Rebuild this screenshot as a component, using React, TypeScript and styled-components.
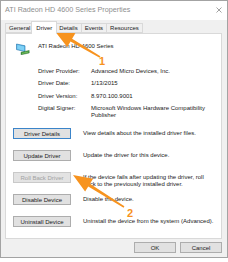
import { Fragment } from "react";
import styled, { createGlobalStyle } from "styled-components";

const GlobalStyle = createGlobalStyle`
    html, body {
        margin: 0;
        padding: 0;
        background: #ffffff;
    }
    body {
        font-family: "Liberation Sans", Arial, sans-serif;
        color: #1a1a1a;
    }
`;

const Page = styled.div`
    position: relative;
    width: 228px;
    height: 262px;
`;

const Window = styled.div`
    box-sizing: border-box;
    width: 228px;
    height: 258px;
    border: 1px solid #a3a3a3;
    background: #f0f0f0;
    display: flex;
    flex-direction: column;
`;

const TitleBar = styled.div`
    flex: none;
    height: 19px;
    padding: 0 5px 2px 4px;
    box-sizing: border-box;
    background: #ffffff;
    display: flex;
    align-items: center;
    justify-content: space-between;
    font-size: 7.2px;
    color: #8e8e8e;
`;

const Body = styled.div`
    flex: 1;
    display: flex;
    flex-direction: column;
    padding: 1px 5px 0 4px;
`;

const TabStrip = styled.div`
    display: flex;
    align-items: flex-end;
    height: 12px;
`;

const Tab = styled.div<{ $active?: boolean }>`
    box-sizing: border-box;
    height: ${(p) => (p.$active ? "13px" : "10px")};
    margin: ${(p) => (p.$active ? "0 -2px -1px -2px" : "0 -1px 0 0")};
    padding: ${(p) => (p.$active ? "2px 4px 0 4px" : "0 3px")};
    border: 1px solid #d9d9d9;
    border-bottom: ${(p) => (p.$active ? "none" : "1px solid #d9d9d9")};
    background: ${(p) => (p.$active ? "#ffffff" : "#f0f0f0")};
    position: relative;
    z-index: ${(p) => (p.$active ? 2 : 1)};
    font-size: 6px;
    line-height: 8px;
    color: #1a1a1a;
    white-space: nowrap;
`;

const Panel = styled.div`
    box-sizing: border-box;
    height: 206px;
    background: #ffffff;
    border: 1px solid #d9d9d9;
    display: flex;
    flex-direction: column;
    padding: 9px 0 0 7px;
`;

const HeaderRow = styled.div`
    display: flex;
    align-items: flex-start;
    gap: 8px;
    padding-left: 3px;
    height: 12px;
    font-size: 6px;
    line-height: 7px;
`;

const InfoGrid = styled.div`
    display: grid;
    grid-template-columns: 53px auto;
    row-gap: 5.5px;
    margin: 12.5px 0 0 25px;
    font-size: 6px;
    line-height: 7px;
`;

const ActionList = styled.div`
    display: grid;
    grid-auto-rows: 22px;
    margin-top: 9px;
`;

const ActionRow = styled.div`
    display: flex;
    align-items: flex-start;
    gap: 12px;
`;

const Button = styled.div<{ $disabled?: boolean; $focused?: boolean; $width: number }>`
    box-sizing: border-box;
    flex: none;
    width: ${(p) => p.$width}px;
    height: 11px;
    display: flex;
    align-items: center;
    justify-content: center;
    background: ${(p) => (p.$disabled ? "#e3e3e3" : "#e1e1e1")};
    border: 1px solid ${(p) => (p.$focused ? "#3b84c9" : p.$disabled ? "#c9c9c9" : "#adadad")};
    color: ${(p) => (p.$disabled ? "#a2a2a2" : "#1a1a1a")};
    font-size: 6px;
    white-space: nowrap;
`;

const Description = styled.div`
    padding-top: 2px;
    font-size: 6px;
    line-height: 7px;
    white-space: nowrap;
`;

const Footer = styled.div`
    display: flex;
    justify-content: flex-end;
    gap: 4px;
    margin-top: 3px;
`;

const Annotations = styled.svg`
    position: absolute;
    top: 0;
    left: 0;
    pointer-events: none;
`;

const Marker = styled.span<{ $x: number; $y: number }>`
    position: absolute;
    left: ${(p) => p.$x}px;
    top: ${(p) => p.$y}px;
    font-size: 11px;
    line-height: 11px;
    font-weight: bold;
    color: #f7931e;
`;

const DeviceIcon = () => (
    <svg width="14" height="12" viewBox="0 0 14 12">
        <polygon points="0.5,1 9,2.8 9,8.6 0.5,6.6" fill="#55b8ea" stroke="#1f6fa8" strokeWidth="0.6" />
        <polygon points="1.3,2 8.2,3.5 8.2,7.7 1.3,6" fill="#7fd0f5" />
        <polygon points="5,9.2 13.2,7.4 13.2,10 5,11.8" fill="#3d9b3f" stroke="#1f5e22" strokeWidth="0.4" />
        <line x1="6" y1="10.4" x2="12.4" y2="9" stroke="#b7d977" strokeWidth="0.5" />
    </svg>
);

const CloseIcon = () => (
    <svg width="6" height="6" viewBox="0 0 6 6">
        <path d="M0.5 0.5 L5.5 5.5 M5.5 0.5 L0.5 5.5" stroke="#7a7a7a" strokeWidth="0.7" />
    </svg>
);

const tabs = ["General", "Driver", "Details", "Events", "Resources"];

const info = [
    { label: "Driver Provider:", value: "Advanced Micro Devices, Inc." },
    { label: "Driver Date:", value: "1/13/2015" },
    { label: "Driver Version:", value: "8.970.100.9001" },
    { label: "Digital Signer:", value: "Microsoft Windows Hardware Compatibility\nPublisher" },
];

const actions = [
    { name: "Driver Details", text: "View details about the installed driver files.", focused: true },
    { name: "Update Driver", text: "Update the driver for this device." },
    { name: "Roll Back Driver", text: "If the device fails after updating the driver, roll\nback to the previously installed driver.", disabled: true },
    { name: "Disable Device", text: "Disable the device." },
    { name: "Uninstall Device", text: "Uninstall the device from the system (Advanced)." },
];

const multiline = (text: string) =>
    text.split("\n").map((line, i) => <div key={i}>{line}</div>);

const App = (): JSX.Element => {
    return (
        <Page>
            <GlobalStyle />
            <Window>
                <TitleBar>
                    <span>ATI Radeon HD 4600 Series Properties</span>
                    <CloseIcon />
                </TitleBar>
                <Body>
                    <TabStrip>
                        {tabs.map((t) => (
                            <Tab key={t} $active={t === "Driver"}>{t}</Tab>
                        ))}
                    </TabStrip>
                    <Panel>
                        <HeaderRow>
                            <DeviceIcon />
                            <span>ATI Radeon HD 4600 Series</span>
                        </HeaderRow>
                        <InfoGrid>
                            {info.map((row) => (
                                <Fragment key={row.label}>
                                    <div>{row.label}</div>
                                    <div>{multiline(row.value)}</div>
                                </Fragment>
                            ))}
                        </InfoGrid>
                        <ActionList>
                            {actions.map((a) => (
                                <ActionRow key={a.name}>
                                    <Button $width={58} $focused={a.focused} $disabled={a.disabled}>{a.name}</Button>
                                    <Description>{multiline(a.text)}</Description>
                                </ActionRow>
                            ))}
                        </ActionList>
                    </Panel>
                    <Footer>
                        <Button $width={42}>OK</Button>
                        <Button $width={42}>Cancel</Button>
                    </Footer>
                </Body>
            </Window>
            <Annotations width="228" height="262" viewBox="0 0 228 262">
                <polygon
                    points="54,30 75.4,33.2 72.1,38.7 100.4,56.3 99.6,57.7 70.5,41.5 67.2,47"
                    fill="#f7931e"
                />
                <polygon
                    points="73,175 93.1,178.8 89.95,183.7 124.4,206.3 123.6,207.7 88.25,186.5 85.1,191.5"
                    fill="#f7931e"
                />
            </Annotations>
            <Marker $x={99} $y={56}>1</Marker>
            <Marker $x={127} $y={208}>2</Marker>
        </Page>
    );
};

export default App;
